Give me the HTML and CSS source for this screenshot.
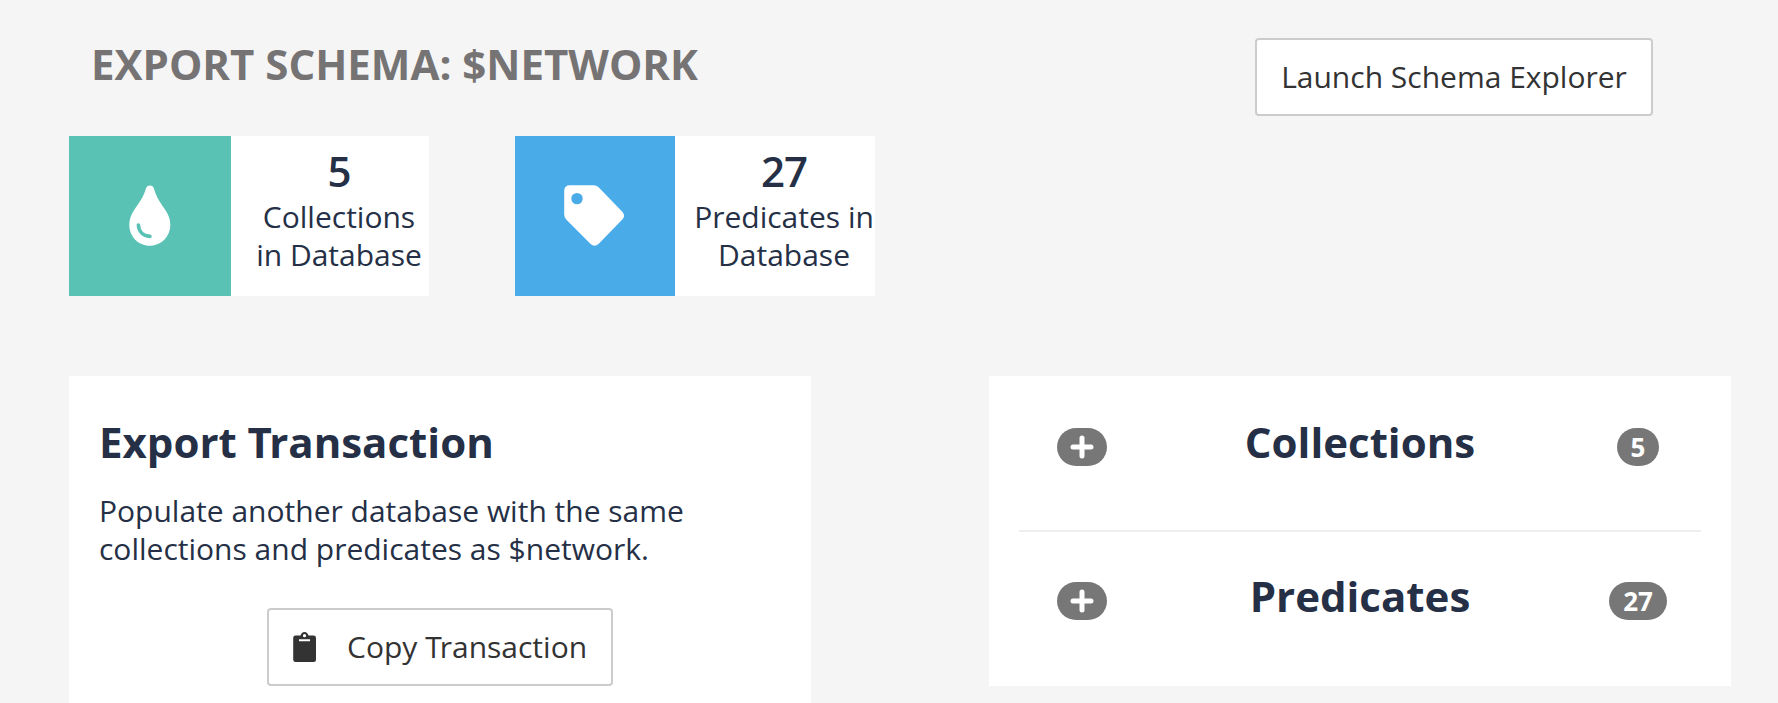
FILE: index.html
```
<!DOCTYPE html>
<html lang="en">
<head>
<meta charset="utf-8">
<title>Export Schema</title>
<link rel="stylesheet" href="styles.css">
</head>
<body>
<main class="page">
  <header class="top">
    <h1 class="title">EXPORT SCHEMA: $NETWORK</h1>
    <button class="btn btn-launch">Launch Schema Explorer</button>
  </header>

  <section class="stats">
    <div class="stat">
      <div class="stat-icon stat-icon-green">
        <svg width="42" height="62" viewBox="0 0 42 62"><path d="M21 .5C23 .5 24.300 1.600 24.900 3.500C27.500 12.500 31.500 18 36 24.500C39.500 29.800 41.300 34 41.300 39.800C41.300 51.500 32.300 60.800 20.800 60.800C9.300 60.800 .3 51.500 .3 39.800C.3 34 2 29.800 5.500 24.500C10 18 14.300 12.500 16.900 3.500C17.500 1.600 19 .5 21 .5Z" fill="#fff"/><path d="M9.400 40C9.700 46.500 14 50.800 20.900 51.400" fill="none" stroke="#59c2b4" stroke-width="3.600" stroke-linecap="round"/></svg>
      </div>
      <div class="stat-text">
        <div class="stat-number">5</div>
        <div>Collections<br>in Database</div>
      </div>
    </div>
    <div class="stat">
      <div class="stat-icon stat-icon-blue">
        <svg width="62" height="62" viewBox="0 0 62 62"><path fill="#fff" fill-rule="evenodd" d="M6 .3H29.500Q32.500 .3 34.600 2.300L58.300 26.700Q61.800 30.700 58.300 34.500L34.500 58.900Q30.500 62.500 26.600 58.900L2.200 34.500Q.2 32.400 .2 29.500V6Q.2 .3 6 .3ZM13 7.900A5.700 5.700 0 1 0 13 19.300A5.700 5.700 0 1 0 13 7.900Z"/></svg>
      </div>
      <div class="stat-text">
        <div class="stat-number">27</div>
        <div>Predicates in<br>Database</div>
      </div>
    </div>
  </section>

  <section class="panels">
    <div class="panel panel-export">
      <h2 class="heading">Export <span class="kern">T</span>ransaction</h2>
      <p class="description">Populate another database with the same<br>collections and predicates as $network.</p>
      <button class="btn btn-copy">
        <svg width="24" height="30" viewBox="0 0 24 30"><path fill="#333" fill-rule="evenodd" d="M2.500 3.600H7.500C8 1.500 9.500 0 11.500 0S15 1.500 15.500 3.600H20.500Q23 3.600 23 6V27.500Q23 30 20.500 30H2.500Q.2 30 .2 27.500V6Q.2 3.600 2.500 3.600ZM11.500 2.100A1.600 1.600 0 1 0 11.500 5.300A1.600 1.600 0 1 0 11.500 2.100ZM6 7.300V9.200H17V7.300Z"/></svg>
        <span>Copy <span class="kern">T</span>ransaction</span>
      </button>
    </div>
    <div class="panel panel-summary">
      <div class="summary-row">
        <button class="badge badge-plus" aria-label="Expand collections"><svg width="24" height="24" viewBox="0 0 24 24"><path d="M12 3V21M3 12H21" stroke="#fff" stroke-width="5" stroke-linecap="round"/></svg></button>
        <h2 class="heading">Collections</h2>
        <span class="badge">5</span>
      </div>
      <div class="divider"></div>
      <div class="summary-row">
        <button class="badge badge-plus" aria-label="Expand predicates"><svg width="24" height="24" viewBox="0 0 24 24"><path d="M12 3V21M3 12H21" stroke="#fff" stroke-width="5" stroke-linecap="round"/></svg></button>
        <h2 class="heading">Predicates</h2>
        <span class="badge">27</span>
      </div>
    </div>
  </section>
</main>
</body>
</html>
```
FILE: styles.css
```
* { box-sizing: border-box; }
html, body { margin: 0; height: 100%; }
body {
  background: #f5f5f5;
  color: #253046;
  font: 30px/38px "Open Sans", "Noto Sans", sans-serif;
  overflow: hidden;
}
svg { display: block; flex: none; }
.page { height: 703px; padding: 38px 47px 0 69px; display: flex; flex-direction: column; overflow: hidden; }
.top { display: flex; justify-content: space-between; height: 98px; padding: 0 78px 0 22px; }
.title { margin: 3px 0 0; font-size: 42px; line-height: 46px; font-weight: 700; color: #757373; }
.heading { margin: 0; font-size: 42px; line-height: 46px; font-weight: 700; }
.kern { letter-spacing: -0.065em; }
.btn {
  display: flex; align-items: center; justify-content: center;
  height: 78px; padding: 0; font: inherit; color: #333;
  background: #fff; border: 2px solid #ccc; border-radius: 4px; white-space: nowrap;
}
.btn-launch { width: 398px; }
.btn-copy { width: 346px; margin: 40px 0 0 168px; justify-content: flex-start; padding-left: 24px; gap: 30px; }
.stats { display: flex; gap: 86px; height: 160px; }
.stat { display: flex; width: 360px; background: #fff; }
.stat-icon { display: flex; align-items: center; justify-content: center; width: 160px; }
.stat-icon-green { width: 162px; background: #59c2b4; }
.stat-icon-blue { background: #4aabe9; }
.stat-text { flex: 1; padding: 12px 0 0 18px; text-align: center; white-space: nowrap; }
.stat-number { font-size: 42px; line-height: 46px; font-weight: 600; letter-spacing: -1px; margin-bottom: 4px; }
.panels { display: flex; gap: 178px; margin-top: 80px; }
.panel { width: 742px; background: #fff; padding: 43px 30px 0; }
.panel-export { height: 327px; }
.panel-summary { height: 310px; }
.description { margin: 27px 0 0; white-space: nowrap; }
.summary-row { display: grid; grid-template-columns: 126px 430px 126px; justify-items: center; align-items: start; height: 111px; }
.badge {
  display: flex; align-items: center; justify-content: center;
  height: 38px; padding: 0 14px; margin-top: 9px; border: 0; border-radius: 19px;
  background: #777; color: #fff; font: 700 26px/26px "Open Sans", "Noto Sans", sans-serif;
}
.badge-plus { width: 50px; padding: 0; }
.badge-plus svg { margin-top: -1px; }
.divider { height: 2px; background: #eee; margin-bottom: 41px; }
```
